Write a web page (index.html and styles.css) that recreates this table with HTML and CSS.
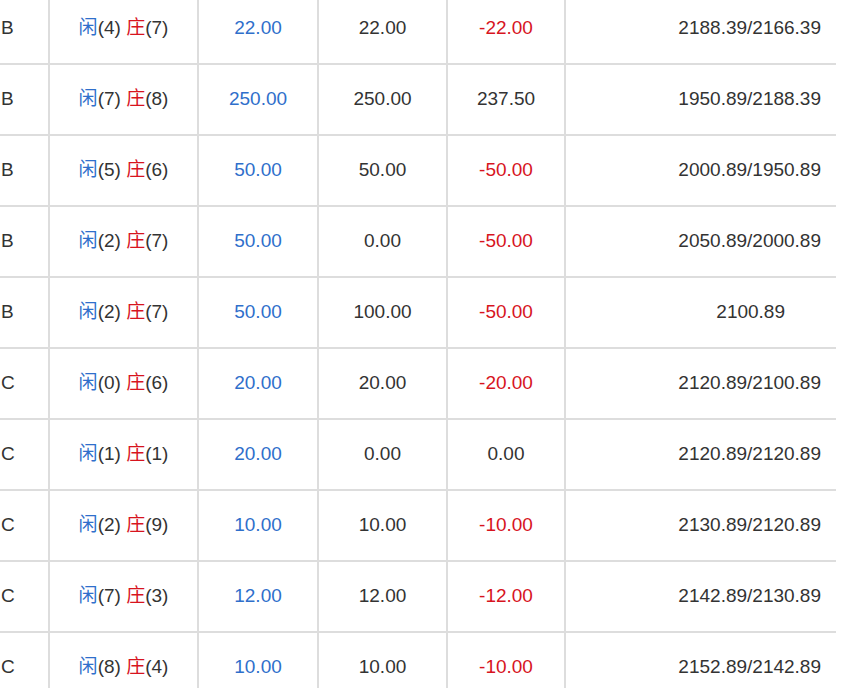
FILE: index.html
```html
<!DOCTYPE html>
<html lang="zh">
<head>
<meta charset="utf-8">
<title>记录</title>
<link rel="stylesheet" href="styles.css">
</head>
<body>
<div class="ledger">
  <div class="cell c-type">B</div><div class="cell c-hand"><span><span class="p">闲</span>(4) <span class="b">庄</span>(7)</span></div><div class="cell blue">22.00</div><div class="cell">22.00</div><div class="cell red">-22.00</div><div class="cell c-bal">2188.39/2166.39</div>
  <div class="cell c-type">B</div><div class="cell c-hand"><span><span class="p">闲</span>(7) <span class="b">庄</span>(8)</span></div><div class="cell blue">250.00</div><div class="cell">250.00</div><div class="cell">237.50</div><div class="cell c-bal">1950.89/2188.39</div>
  <div class="cell c-type">B</div><div class="cell c-hand"><span><span class="p">闲</span>(5) <span class="b">庄</span>(6)</span></div><div class="cell blue">50.00</div><div class="cell">50.00</div><div class="cell red">-50.00</div><div class="cell c-bal">2000.89/1950.89</div>
  <div class="cell c-type">B</div><div class="cell c-hand"><span><span class="p">闲</span>(2) <span class="b">庄</span>(7)</span></div><div class="cell blue">50.00</div><div class="cell">0.00</div><div class="cell red">-50.00</div><div class="cell c-bal">2050.89/2000.89</div>
  <div class="cell c-type">B</div><div class="cell c-hand"><span><span class="p">闲</span>(2) <span class="b">庄</span>(7)</span></div><div class="cell blue">50.00</div><div class="cell">100.00</div><div class="cell red">-50.00</div><div class="cell c-bal single">2100.89</div>
  <div class="cell c-type">C</div><div class="cell c-hand"><span><span class="p">闲</span>(0) <span class="b">庄</span>(6)</span></div><div class="cell blue">20.00</div><div class="cell">20.00</div><div class="cell red">-20.00</div><div class="cell c-bal">2120.89/2100.89</div>
  <div class="cell c-type">C</div><div class="cell c-hand"><span><span class="p">闲</span>(1) <span class="b">庄</span>(1)</span></div><div class="cell blue">20.00</div><div class="cell">0.00</div><div class="cell">0.00</div><div class="cell c-bal">2120.89/2120.89</div>
  <div class="cell c-type">C</div><div class="cell c-hand"><span><span class="p">闲</span>(2) <span class="b">庄</span>(9)</span></div><div class="cell blue">10.00</div><div class="cell">10.00</div><div class="cell red">-10.00</div><div class="cell c-bal">2130.89/2120.89</div>
  <div class="cell c-type">C</div><div class="cell c-hand"><span><span class="p">闲</span>(7) <span class="b">庄</span>(3)</span></div><div class="cell blue">12.00</div><div class="cell">12.00</div><div class="cell red">-12.00</div><div class="cell c-bal">2142.89/2130.89</div>
  <div class="cell c-type">C</div><div class="cell c-hand"><span><span class="p">闲</span>(8) <span class="b">庄</span>(4)</span></div><div class="cell blue">10.00</div><div class="cell">10.00</div><div class="cell red">-10.00</div><div class="cell c-bal">2152.89/2142.89</div>
</div>
</body>
</html>
```

FILE: styles.css
```css
html, body {
  margin: 0;
  padding: 0;
  background: #ffffff;
  overflow: hidden;
}

body {
  font-family: "Liberation Sans", Arial, "Noto Sans CJK SC", sans-serif;
  font-size: 19px;
  line-height: 22px;
  color: #333333;
}

.ledger {
  display: grid;
  grid-template-columns: 48px 147px 118px 127px 116px 270px;
  grid-auto-rows: 69px;
  gap: 2px;
  width: 836px;
  margin-top: -6px;
  background: #dddddd;
}

.cell {
  background: #ffffff;
  display: flex;
  align-items: center;
  justify-content: center;
  white-space: nowrap;
  padding-bottom: 2px;
}

.c-type {
  justify-content: flex-start;
  padding-left: 1px;
}

.c-bal {
  justify-content: flex-end;
  padding-right: 15px;
}

.c-bal.single {
  padding-right: 51px;
}

.blue, .p {
  color: #2f6fcb;
}

.red, .b {
  color: #d7141e;
}
```
